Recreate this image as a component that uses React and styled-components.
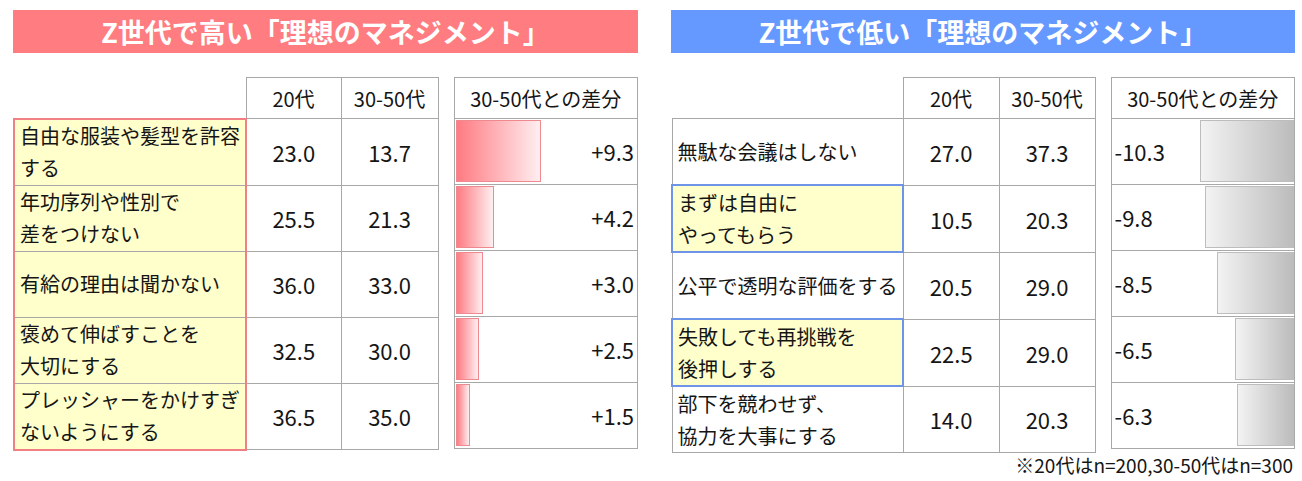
import React from 'react';
import styled, { createGlobalStyle } from 'styled-components';

const GRID = '#a8a8a8';
const YELLOW = '#ffffcc';

const GlobalStyle = createGlobalStyle`
  body {
    margin: 0;
    background: #fff;
    color: #151515;
    font-family: "Noto Sans CJK JP", "Noto Sans", sans-serif;
  }
`;

const Page = styled.div`
  display: flex;
  gap: 33px;
  padding: 10px 0 0 13px;
`;

const Panel = styled.section`
  width: ${p => p.$w}px;
  display: flex;
  flex-direction: column;
`;

const Title = styled.h2`
  margin: 0 0 24px;
  height: 43px;
  display: flex;
  align-items: center;
  justify-content: center;
  background: ${p => p.$color};
  color: #fff;
  font-size: 27px;
  font-weight: 700;
`;

const Tables = styled.div`
  display: flex;
  align-items: flex-start;
  gap: 15px;
`;

const Table = styled.table`
  border-collapse: collapse;
  table-layout: fixed;
  width: ${p => p.$w}px;
  font-size: 20px;
`;

const Col = styled.col`
  width: ${p => p.$w}px;
`;

const HeadCell = styled.th`
  height: 40px;
  padding: 0;
  font-weight: 400;
  text-align: center;
  white-space: nowrap;
  border: ${p => (p.$blank ? 'none' : `1px solid ${GRID}`)};
`;

const LabelCell = styled.td`
  height: 65px;
  padding: 0 2px 0 5px;
  line-height: 32px;
  white-space: nowrap;
  background: ${p => (p.$frame ? YELLOW : '#fff')};
  border: 1px solid ${GRID};
  ${p => p.$frame && p.$group && `
    border-left: 2px solid ${p.$frame};
    border-right: 2px solid ${p.$frame};
    ${p.$first ? `border-top: 2px solid ${p.$frame};` : ''}
    ${p.$last ? `border-bottom: 2px solid ${p.$frame};` : ''}
  `}
  ${p => p.$frame && !p.$group && `border: 2px solid ${p.$frame};`}
`;

const NumCell = styled.td`
  height: 65px;
  padding: 0;
  text-align: center;
  font-size: 22px;
  border: 1px solid ${GRID};
`;

const DiffCell = styled.td`
  height: 65px;
  padding: 0;
  border: 1px solid ${GRID};
`;

const DiffInner = styled.div`
  height: 65px;
  box-sizing: border-box;
  display: flex;
  flex-direction: ${p => (p.$neg ? 'row-reverse' : 'row')};
  align-items: stretch;
  justify-content: space-between;
  padding: ${p => (p.$neg ? '1px 0 2px 3px' : '1px 3px 2px 1px')};
`;

const Bar = styled.div`
  box-sizing: border-box;
  flex: none;
  border: 1px solid ${p => (p.$neg ? '#bdbdbd' : '#ef8990')};
  background: ${p =>
    p.$neg
      ? 'linear-gradient(to right, #f3f3f3, #bcbcbc)'
      : 'linear-gradient(to right, #ff7b82, #ffeef0)'};
`;

const Value = styled.span`
  align-self: center;
  font-size: 22px;
`;

const Note = styled.p`
  margin: 0 2px 0 0;
  text-align: right;
  font-size: 19px;
  line-height: 24px;
`;

const high = [
  { label: ['自由な服装や髪型を許容', 'する'], a: '23.0', b: '13.7', d: 9.3 },
  { label: ['年功序列や性別で', '差をつけない'], a: '25.5', b: '21.3', d: 4.2 },
  { label: ['有給の理由は聞かない'], a: '36.0', b: '33.0', d: 3.0 },
  { label: ['褒めて伸ばすことを', '大切にする'], a: '32.5', b: '30.0', d: 2.5 },
  { label: ['プレッシャーをかけすぎ', 'ないようにする'], a: '36.5', b: '35.0', d: 1.5 },
];

const low = [
  { label: ['無駄な会議はしない'], a: '27.0', b: '37.3', d: -10.3 },
  { label: ['まずは自由に', 'やってもらう'], a: '10.5', b: '20.3', d: -9.8, hl: true },
  { label: ['公平で透明な評価をする'], a: '20.5', b: '29.0', d: -8.5 },
  { label: ['失敗しても再挑戦を', '後押しする'], a: '22.5', b: '29.0', d: -6.5, hl: true },
  { label: ['部下を競わせず、', '協力を大事にする'], a: '14.0', b: '20.3', d: -6.3 },
];

const fmt = d => (d > 0 ? `+${d.toFixed(1)}` : d.toFixed(1));

function Ranking({ title, color, rows, frame, group, widths, diffW, width, note }) {
  return (
    <Panel $w={width}>
      <Title $color={color}>{title}</Title>
      <Tables>
        <Table $w={widths[0] + widths[1] + widths[2]}>
          <colgroup>
            {widths.map((w, i) => <Col key={i} $w={w} />)}
          </colgroup>
          <thead>
            <tr>
              <HeadCell $blank />
              <HeadCell>20代</HeadCell>
              <HeadCell>30-50代</HeadCell>
            </tr>
          </thead>
          <tbody>
            {rows.map((r, i) => (
              <tr key={i}>
                <LabelCell
                  $frame={group || r.hl ? frame : null}
                  $group={group}
                  $first={i === 0}
                  $last={i === rows.length - 1}
                >
                  {r.label.map((l, j) => <div key={j}>{l}</div>)}
                </LabelCell>
                <NumCell>{r.a}</NumCell>
                <NumCell>{r.b}</NumCell>
              </tr>
            ))}
          </tbody>
        </Table>
        <Table $w={diffW}>
          <thead>
            <tr>
              <HeadCell>30-50代との差分</HeadCell>
            </tr>
          </thead>
          <tbody>
            {rows.map((r, i) => (
              <tr key={i}>
                <DiffCell>
                  <DiffInner $neg={r.d < 0}>
                    <Bar $neg={r.d < 0} style={{ width: Math.round(Math.abs(r.d) * 9.1) }} />
                    <Value>{fmt(r.d)}</Value>
                  </DiffInner>
                </DiffCell>
              </tr>
            ))}
          </tbody>
        </Table>
      </Tables>
      {note && <Note>{note}</Note>}
    </Panel>
  );
}

export default function App() {
  return (
    <>
      <GlobalStyle />
      <Page>
        <Ranking
          title="Z世代で高い「理想のマネジメント」"
          color="#ff7c80"
          rows={high}
          frame="#f08084"
          group
          widths={[232, 95, 97]}
          diffW={185}
          width={625}
        />
        <Ranking
          title="Z世代で低い「理想のマネジメント」"
          color="#6699ff"
          rows={low}
          frame="#6d94e6"
          widths={[231, 96, 96]}
          diffW={185}
          width={624}
          note="※20代はn=200,30-50代はn=300"
        />
      </Page>
    </>
  );
}
